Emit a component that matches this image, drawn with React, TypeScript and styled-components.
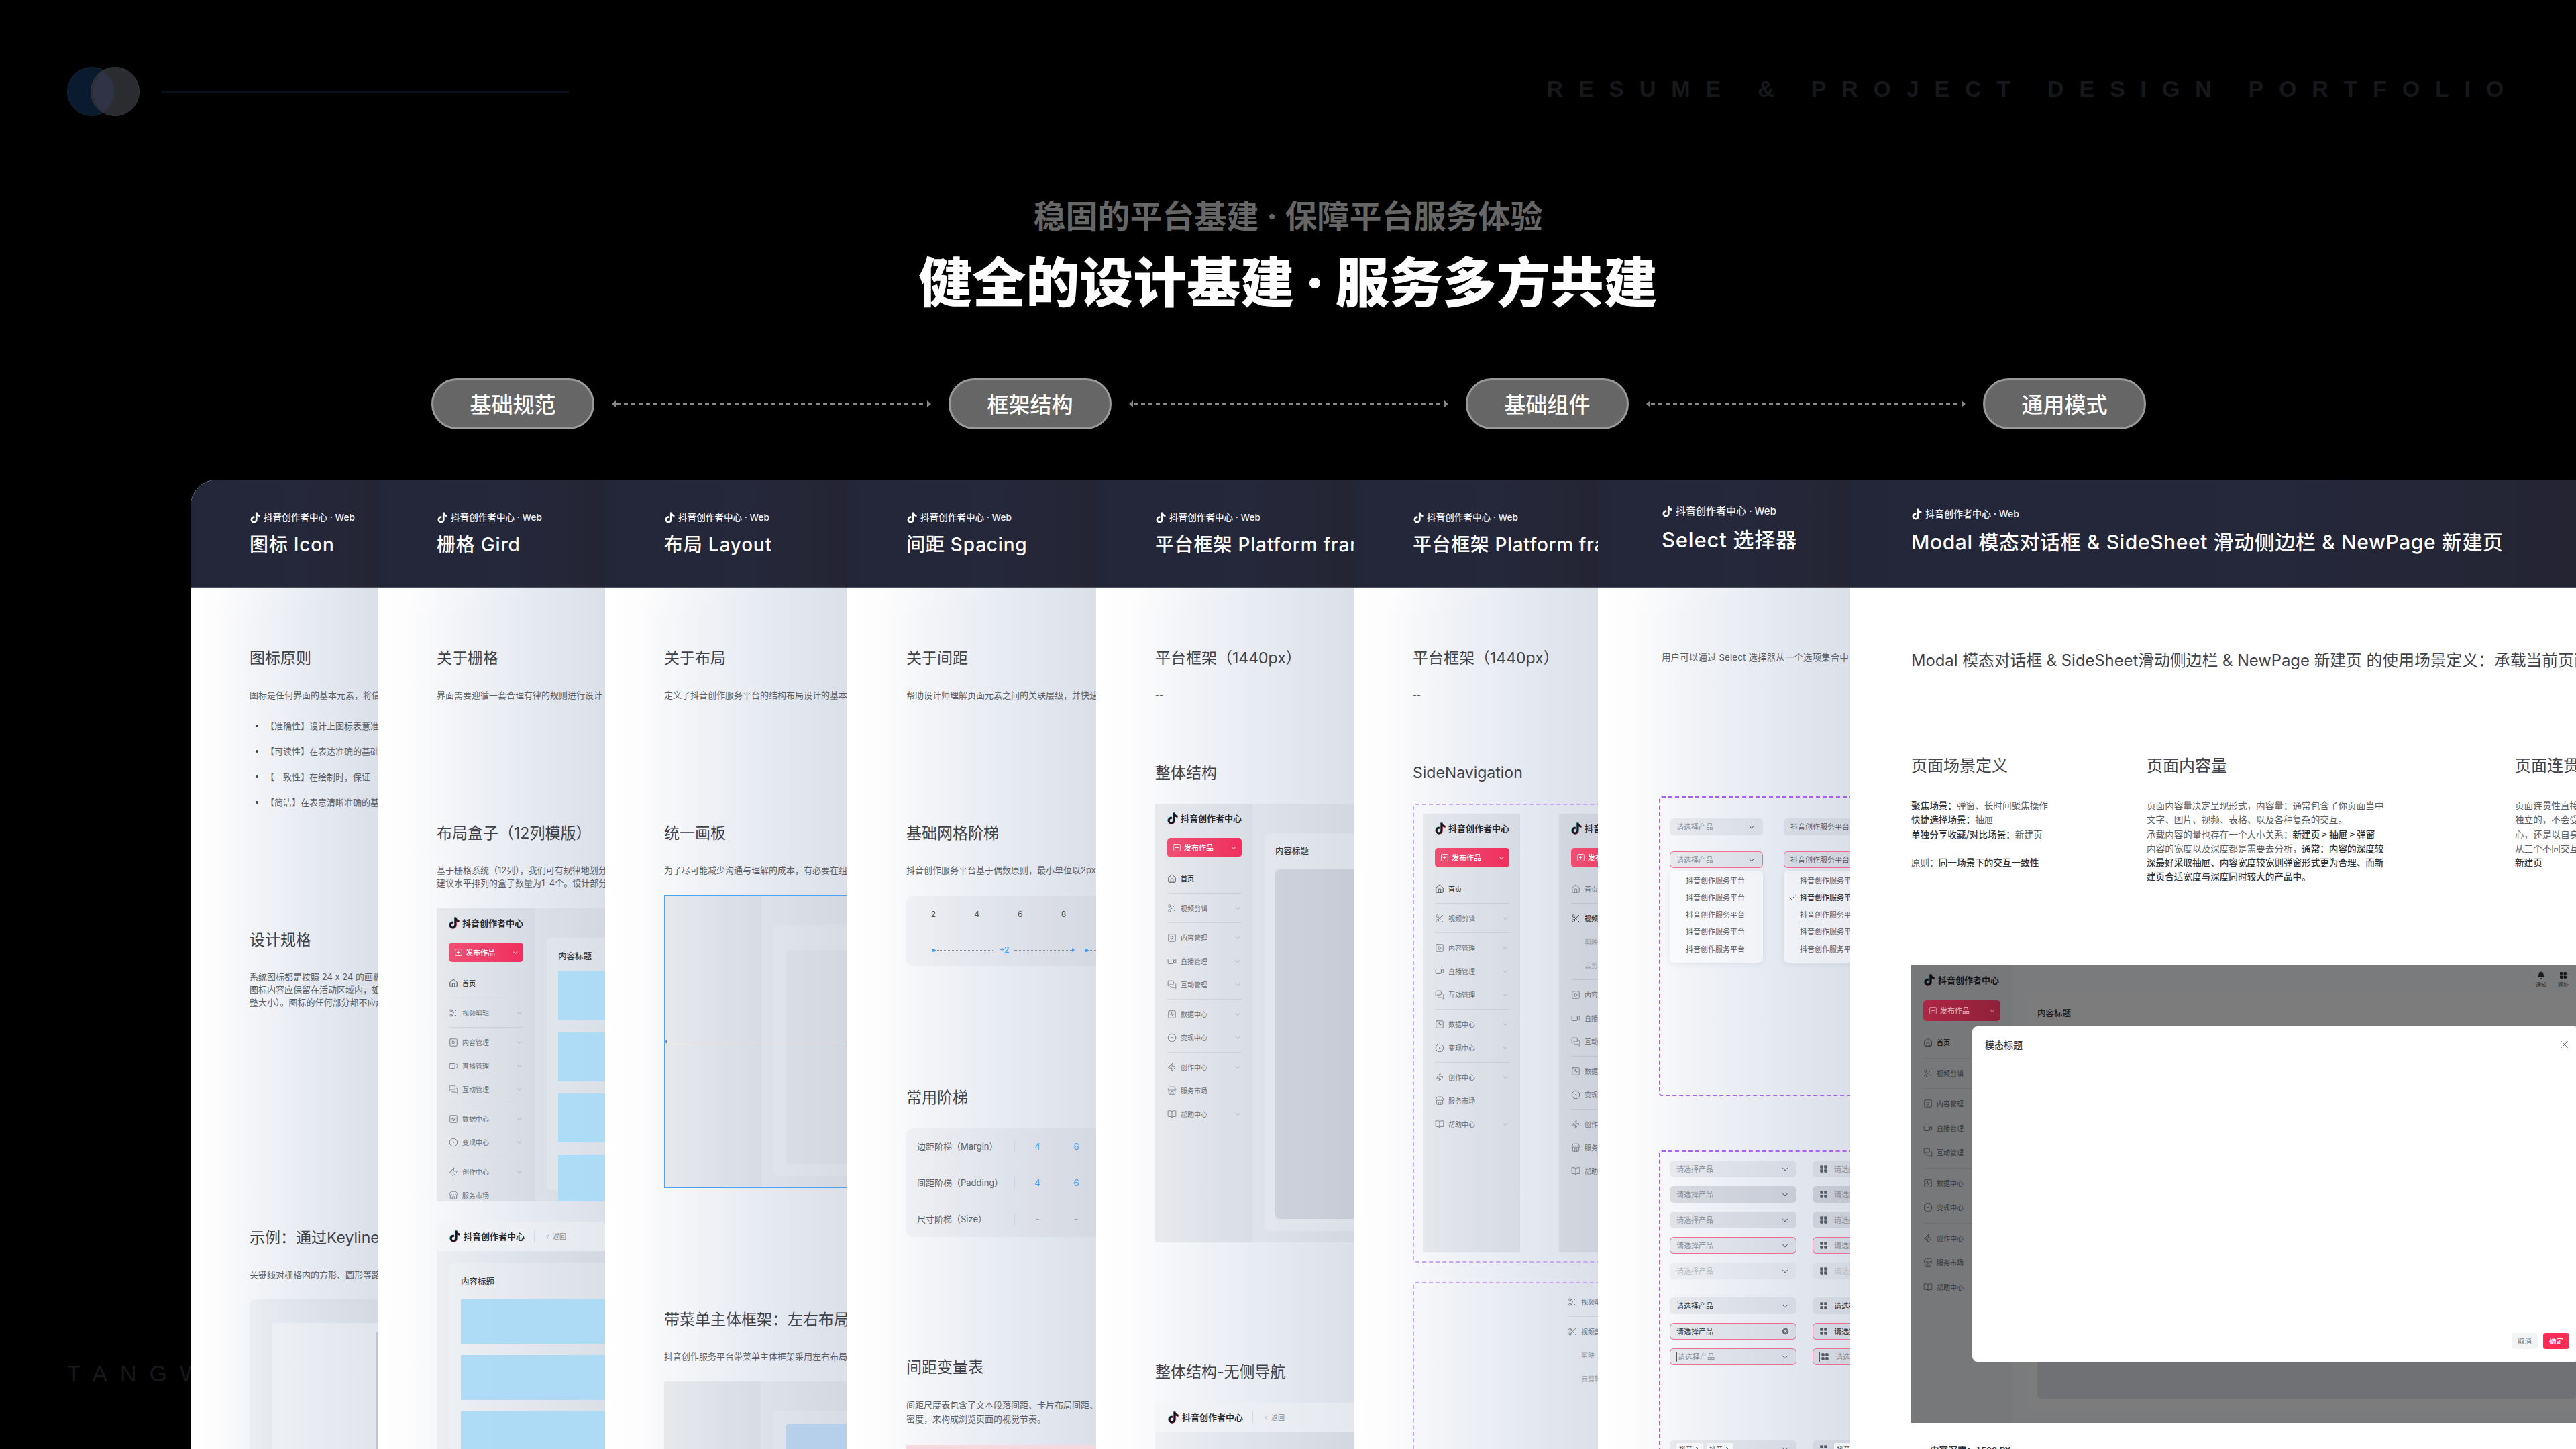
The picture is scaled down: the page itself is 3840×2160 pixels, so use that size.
import React from "react";
import styled, { createGlobalStyle } from "styled-components";
import {
  House, Scissors, SquarePlay, Video, MessagesSquare, SquareActivity, CircleDot, Zap, Store, BookOpen,
  ChevronDown, ChevronLeft, Check, X, Bell, LayoutGrid, SquarePlus, CircleX,
} from "lucide-react";

const Global = createGlobalStyle`
  html, body { margin: 0; padding: 0; background: #000; }
  * { box-sizing: border-box; }
  #root { width: 3840px; height: 2160px; }
`;

const SANS = `Inter, "Noto Sans CJK SC", "Noto Sans", sans-serif`;
const CJK = `"Noto Sans CJK SC", "Noto Sans", sans-serif`;

const Page = styled.div`
  width: 3840px; height: 2160px; background: #000; overflow: hidden;
  display: flex; flex-direction: column; font-family: ${SANS};
`;
const TopBar = styled.header`
  display: flex; height: 173px; padding: 100px 85px 0 100px; flex: 0 0 auto;
`;
const LogoMark = styled.svg`width: 108px; height: 73px; flex: 0 0 auto;`;
const TopRule = styled.div`
  flex: 0 0 607px; height: 3px; margin: 35px 0 0 33px; background: #0a0d1a;
`;
const Strap = styled.div`
  margin: 12px 0 0 auto; font: 700 34px/41px "Liberation Sans", sans-serif;
  letter-spacing: 22.8px; color: #17181c; white-space: nowrap;
`;
const Lead = styled.h2`
  margin: 120px 0 0; text-align: center; font: 700 48px/60px ${SANS}; color: #666;
`;
const Title = styled.h1`
  margin: 23px 0 0; text-align: center; font: 900 80px/90px ${SANS}; color: #fff;
`;
const Steps = styled.div`
  display: flex; align-items: center; margin: 98px 0 0 643px; gap: 26px; height: 76px;
`;
const Pill = styled.div`
  flex: 0 0 243px; height: 76px; border-radius: 38px; background: #666; border: 3px solid #999;
  display: flex; align-items: center; justify-content: center; padding-bottom: 3px;
  font: 500 32px/1 ${CJK}; color: #fff;
`;
const Link = styled.svg`flex: 0 0 476px; height: 16px;`;

const Stage = styled.div`display: flex; flex: 1; margin-top: 75px; min-height: 0;`;
const Gutter = styled.div`
  flex: 0 0 284px; padding-left: 100px; overflow: hidden; display: flex; align-items: flex-end;
  padding-bottom: 93px; font: 400 34px/40px "Liberation Sans", sans-serif; letter-spacing: 19px;
  color: #17181c; white-space: nowrap;
`;
const Card = styled.main`
  flex: 1; display: flex; overflow: hidden; border-top-left-radius: 40px; min-width: 0;
`;

const Column = styled.section<{ $w: number; $plain?: boolean }>`
  flex: 0 0 ${(p) => p.$w}px; display: flex; flex-direction: column; overflow: hidden;
  background: ${(p) =>
    p.$plain
      ? "#fff"
      : `linear-gradient(160deg, rgba(255,255,255,.8) 0, rgba(255,255,255,0) 240px),
         linear-gradient(90deg, #fff 0, #fcfcfd 14%, #f0f2f6 40%, #e4e8f0 72%, #dbdfe8 100%)`};
`;
const Head = styled.div<{ $pad: number; $top?: number }>`
  flex: 0 0 161px; padding: ${(p) => p.$top ?? 46}px 0 0 ${(p) => p.$pad}px;
  background: linear-gradient(90deg, #232638, #25273a 60%, #242433);
  border-bottom: 1px solid #4b4e5e; white-space: nowrap; color: #fff;
`;
const Brand = styled.div<{ $size?: number }>`
  display: flex; align-items: center; gap: 4px; height: 20px;
  font: 500 ${(p) => p.$size ?? 13.6}px/20px ${SANS}; color: #f0f1f4;
`;
const HeadTitle = styled.div<{ $size?: number; $gap?: number; $ls?: number }>`
  margin-top: ${(p) => p.$gap ?? 11}px; font: 500 ${(p) => p.$size ?? 28}px/40px ${SANS}; color: #fff;
  letter-spacing: ${(p) => p.$ls ?? 0.8}px;
`;
const Body = styled.div<{ $pad: number }>`
  flex: 1; padding-left: ${(p) => p.$pad}px; white-space: nowrap; min-height: 0;
`;
const H3 = styled.h3<{ $mt: number; $size?: number }>`
  margin: ${(p) => p.$mt}px 0 0; font: 400 ${(p) => p.$size ?? 23}px/32px ${SANS}; color: #3f424a;
`;
const P = styled.p<{ $mt?: number; $lh?: number; $size?: number; $ml?: number }>`
  margin: ${(p) => p.$mt ?? 30}px 0 0 ${(p) => p.$ml ?? 0}px;
  font: 400 ${(p) => p.$size ?? 13}px/${(p) => p.$lh ?? 19}px ${SANS};
  color: #5b5e66;
`;
const Bullets = styled.ul`margin: 17px 0 0; padding: 0 0 0 24px; list-style: none;`;
const Bullet = styled.li`
  position: relative; height: 38px; font: 400 13px/38px ${SANS}; color: #5b5e66;
  &::before {
    content: ""; position: absolute; left: -15px; top: 17px; width: 4px; height: 4px;
    border-radius: 50%; background: #3c3f48;
  }
`;
const KeylinePanel = styled.div`
  margin-top: 27px; width: 400px; height: 260px; padding: 35px 0 0 34px;
  background: rgba(30, 40, 70, .04); border-radius: 8px;
`;
const KeylineInner = styled.div`
  height: 100%; background: rgba(255, 255, 255, .32); padding: 14px 0 0 154px;
`;
const KeylineStrip = styled.div`width: 6px; height: 100%; background: rgba(30, 40, 70, .16);`;

/* app shell mock */
const Shell = styled.div<{ $h: number; $mt: number; $w?: number; $outlined?: boolean }>`
  position: relative; display: flex; width: ${(p) => p.$w ?? 1000}px; height: ${(p) => p.$h}px;
  margin-top: ${(p) => p.$mt}px; background: rgba(30, 40, 70, .045); overflow: hidden;
  ${(p) => (p.$outlined ? "border: 1px solid #4ba3f5;" : "")}
`;
const ShellColumn = styled(Shell)`flex-direction: column;`;
const Side = styled.aside<{ $w?: number }>`
  flex: 0 0 ${(p) => p.$w ?? 146}px; height: 100%; padding: 12px 0 0 18px;
  background: linear-gradient(90deg, rgba(70,70,80,.035), rgba(40,40,60,.03));
`;
const SideInner = styled.div<{ $w?: number }>`width: ${(p) => p.$w ?? 111}px;`;
const Logo = styled.div`
  display: flex; align-items: center; gap: 4px; height: 20px;
  font: 700 13px/20px ${CJK}; color: #26282f; white-space: nowrap;
`;
const NavButton = styled.div<{ $top?: number; $dim?: boolean; $h?: number }>`
  display: flex; align-items: center; gap: 4px; height: ${(p) => p.$h ?? 29}px;
  margin-top: ${(p) => p.$top ?? 19}px; padding: 0 6px 0 8px; border-radius: 5px;
  position: relative; z-index: ${(p) => (p.$dim ? 3 : 0)};
  background: ${(p) => (p.$dim ? "linear-gradient(90deg,#ad2743,#8f2039)" : "linear-gradient(90deg,#ef4f74,#f02f5f)")};
  font: 500 11px/1 ${CJK}; color: ${(p) => (p.$dim ? "#d9a3ae" : "#fff")};
  & > svg:last-child { margin-left: auto; }
`;
const NavList = styled.nav<{ $top?: number }>`margin-top: ${(p) => p.$top ?? 14}px;`;
const NavRow = styled.div<{ $h?: number; $sub?: boolean; $dark?: boolean }>`
  display: flex; align-items: center; gap: 6px; height: ${(p) => p.$h ?? 35}px;
  padding-left: ${(p) => (p.$sub ? 20 : 0)}px;
  font: ${(p) => (p.$dark ? 500 : 400)} 10px/1 ${CJK};
  color: ${(p) => (p.$dark ? "#2c2e35" : p.$sub ? "#9a9da4" : "#6b6e76")};
  & > svg:last-child:not(:first-child) { margin-left: auto; }
`;
const NavRule = styled.div`
  height: 1px; margin: 4px 0; background: rgba(40, 45, 70, .09);
`;
const ShellMain = styled.div<{ $bottom?: number }>`
  flex: 1; min-width: 0; height: 100%; padding: 44px 0 ${(p) => p.$bottom ?? 17}px 18px;
`;
const ShellCard = styled.div<{ $pad?: number; $alpha?: number }>`
  height: 100%; padding: ${(p) => p.$pad ?? 16}px 0 18px ${(p) => p.$pad ?? 16}px;
  background: rgba(255, 255, 255, ${(p) => p.$alpha ?? 0.2}); border-radius: 8px;
  display: flex; flex-direction: column;
`;
const ShellTitle = styled.div`
  font: 500 12.5px/20px ${CJK}; color: #3a3c44; flex: 0 0 20px;
`;
const GreyBlock = styled.div<{ $mt?: number; $tone?: string }>`
  margin-top: ${(p) => p.$mt ?? 18}px; flex: 1; min-height: 0; border-radius: 6px;
  background: ${(p) => p.$tone ?? "rgba(60, 75, 110, .13)"};
`;
const BlueStack = styled.div<{ $top: number; $gap: number }>`
  display: flex; flex-direction: column; gap: ${(p) => p.$gap}px; margin-top: ${(p) => p.$top}px;
`;
const BlueBlock = styled.div<{ $h: number }>`
  height: ${(p) => p.$h}px; flex: 0 0 auto; background: linear-gradient(90deg, #aedcf6, #a6d2ec);
`;
const ShellBar = styled.div`
  flex: 0 0 44px; display: flex; align-items: center; padding-left: 18px;
  background: rgba(255, 255, 255, .42);
`;
const BarRule = styled.div`width: 1px; height: 18px; margin: 0 14px; background: rgba(40, 45, 70, .1);`;
const Back = styled.div`
  display: flex; align-items: center; gap: 2px; font: 400 10px/1 ${CJK}; color: #8a8d95;
`;
const ShellBody = styled.div`flex: 1; padding: 17px 0 0 18px; min-height: 0;`;
const Guide = styled.div<{ $top: number }>`
  position: absolute; left: 0; right: 0; top: ${(p) => p.$top}px; height: 1px; background: #4ba3f5;
  &::before {
    content: ""; position: absolute; left: 0; top: -3px; border: 3.5px solid transparent;
    border-right-color: #3293ee; border-left-width: 0;
  }
`;

/* spacing */
const ScalePanel = styled.div`
  margin-top: 28px; width: 400px; height: 105px; padding-top: 18px; border-radius: 10px;
  background: rgba(30, 40, 70, .035);
`;
const ScaleNums = styled.div`display: flex; padding-left: 8px;`;
const ScaleNum = styled.span`flex: 0 0 64.7px; text-align: center; font: 400 12px/20px ${SANS}; color: #4a4d55;`;
const ScaleLine = styled.div`
  display: flex; align-items: center; gap: 0; margin: 36px 0 0 38px; width: 340px; height: 14px;
  font: 500 12px/1 ${SANS}; color: #3c9cf5;
`;
const ScaleDot = styled.i`flex: 0 0 5px; height: 5px; border-radius: 50%; background: #3c9cf5;`;
const ScaleDash = styled.i<{ $w: number }>`
  flex: 0 0 ${(p) => p.$w}px; border-top: 1px dotted #3c9cf5;
`;
const ScaleTick = styled.i`flex: 0 0 1px; height: 14px; margin: 0 5px; background: rgba(70, 80, 110, .3);`;
const ScaleArrow = styled.i`
  flex: 0 0 4px; height: 0; border-left: 4px solid #3c9cf5;
  border-top: 3px solid transparent; border-bottom: 3px solid transparent; box-sizing: content-box;
`;
const ScaleLabel = styled.span`flex: 0 0 30px; text-align: center;`;
const StepTable = styled.div`
  margin-top: 30px; width: 400px; height: 162px; border-radius: 10px; background: rgba(30, 40, 70, .035);
`;
const StepRow = styled.div`display: flex; align-items: center; height: 54px;`;
const StepLabel = styled.div`
  flex: 0 0 162px; height: 18px; padding-left: 16px; border-right: 1px solid rgba(40, 50, 80, .08);
  font: 400 13px/18px ${SANS}; color: #5b5e66;
`;
const StepValue = styled.div<{ $muted?: boolean }>`
  flex: 0 0 58px; padding-left: 9px; text-align: center;
  font: 400 13px/18px ${SANS}; color: ${(p) => (p.$muted ? "#9a9da4" : "#3c9cf5")};
`;
const PinkBar = styled.div`margin-top: 28px; width: 400px; height: 40px; background: #f4d9df;`;

/* selects */
const DashBox = styled.div<{ $h: number; $mt: number; $tone: string; $w?: number; $flex?: boolean }>`
  width: ${(p) => p.$w ?? 800}px; height: ${(p) => p.$h}px; margin-top: ${(p) => p.$mt}px;
  border: 2px dashed ${(p) => p.$tone}; border-radius: 4px;
  ${(p) => (p.$flex ? "display:flex; gap:58px; padding: 13px 0 0 13px;" : "")}
`;
const SelectColumns = styled.div<{ $gap: number; $pad: number }>`
  display: flex; gap: ${(p) => p.$gap}px; padding: ${(p) => p.$pad}px 0 0 14px;
`;
const SelectColumn = styled.div<{ $w: number }>`flex: 0 0 ${(p) => p.$w}px; display: flex; flex-direction: column;`;
const Select = styled.div<{ $bg?: string; $error?: boolean; $text?: string; $mt?: number }>`
  display: flex; align-items: center; flex: 0 0 25px; height: 25px; padding: 0 10px;
  margin-top: ${(p) => p.$mt ?? 0}px; border-radius: 6px; background: ${(p) => p.$bg ?? "rgba(40, 50, 80, .07)"};
  ${(p) => (p.$error ? "box-shadow: inset 0 0 0 1px #ec6f8b;" : "")}
  font: 400 11px/1 ${CJK}; color: ${(p) => p.$text ?? "#8b8e96"}; white-space: nowrap;
  & > svg:last-child { margin-left: auto; color: #555861; }
`;
const Caret = styled.i`width: 1px; height: 14px; margin-right: 1px; background: #555;`;
const PrefixIcon = styled(LayoutGrid)`margin-right: 9px; color: #555861; fill: #555861;`;
const Tag = styled.span`
  display: inline-flex; align-items: center; gap: 3px; height: 18px; padding: 0 4px; margin-right: 5px;
  background: #f5f6f9; border-radius: 3px; font: 400 10px/1 ${CJK}; color: #555;
`;
const Dropdown = styled.div`
  margin-top: 4px; height: 137px; padding: 2px 0; background: rgba(255, 255, 255, .42); border-radius: 6px;
  box-shadow: 0 2px 8px rgba(30, 40, 70, .08);
`;
const Option = styled.div<{ $on?: boolean }>`
  position: relative; height: 25.4px; padding-left: 24px;
  font: ${(p) => (p.$on ? 500 : 400)} 11px/25.4px ${CJK}; color: ${(p) => (p.$on ? "#33353c" : "#55585f")};
  white-space: nowrap;
  & > svg { position: absolute; left: 7px; top: 7px; }
`;
const NavListOffset = styled.div`padding: 10px 0 0 229px; width: 400px;`;

/* modal column */
const IntroRow = styled.div`display: flex; margin-top: 125px;`;
const Intro = styled.div<{ $w?: number }>`
  flex: ${(p) => (p.$w ? `0 0 ${p.$w}px` : "1")};
`;
const IntroText = styled.div`
  margin-top: 32px; font: 400 13.6px/21.3px ${CJK}; color: #5b5e66; height: 128px;
  & b { font-weight: 500; color: #2f3138; }
`;
const Line = styled.div`min-height: 21.3px;`;
const ModalShell = styled.div`
  position: relative; display: flex; width: 991px; height: 682px; margin-top: 121px; overflow: hidden;
  background: #f0f1f4;
`;
const Scrim = styled.div`position: absolute; inset: 0; z-index: 1; background: rgba(0, 0, 0, .49);`;
const ModalDialog = styled.div`
  position: absolute; z-index: 2; left: 91px; top: 91px; width: 905px; height: 500px;
  background: #fff; border-radius: 8px; display: flex; flex-direction: column;
`;
const DialogHead = styled.div`
  display: flex; align-items: center; justify-content: space-between; height: 20px;
  margin: 17px 0 0 19px; padding-right: 13px; font: 500 14px/20px ${CJK}; color: #33353c;
`;
const DialogFoot = styled.div`
  margin-top: auto; display: flex; gap: 8px; padding: 0 15px 19px 0; justify-content: flex-end;
`;
const DialogBtn = styled.div<{ $primary?: boolean }>`
  width: 39px; height: 24px; border-radius: 4px; display: flex; align-items: center; justify-content: center;
  font: 500 10.5px/1 ${CJK}; color: ${(p) => (p.$primary ? "#fff" : "#888")};
  background: ${(p) => (p.$primary ? "#fe2c55" : "#f2f3f5")};
`;
const ModalMain = styled.div`flex: 1; min-width: 0; display: flex; flex-direction: column; padding-left: 18px;`;
const ModalTools = styled.div`
  flex: 0 0 42px; display: flex; justify-content: flex-end; gap: 17px; padding: 9px 11px 0 0;
`;
const Tool = styled.div`
  width: 16px; display: flex; flex-direction: column; align-items: center; gap: 3px;
  font: 400 8px/10px ${CJK}; color: #555;
`;
const ModalCard = styled(ShellCard)`height: auto; flex: 1; margin-bottom: 18px;`;
const Caption = styled.div`
  margin: 30px 0 0 28px; font: 700 13.6px/20px ${CJK}; color: #2f3138;
`;

/* drawings */
const TikTokPath = "M448,209.91a210.06,210.06,0,0,1-122.77-39.25V349.38A162.55,162.55,0,1,1,185,188.31V278.2a74.62,74.62,0,1,0,52.23,71.18V0l88,0a121.18,121.18,0,0,0,1.86,22.17h0A122.18,122.18,0,0,0,381,102.39a121.43,121.43,0,0,0,67,20.14Z";
const Note = ({ size = 16, color }: { size?: number; color?: boolean }) => (
  <svg width={size} height={size} viewBox="-20 -16 488 544">
    {color && <path d={TikTokPath} fill="#25d9e4" transform="translate(-16 -8)" />}
    {color && <path d={TikTokPath} fill="#fe2c55" transform="translate(14 10)" />}
    <path d={TikTokPath} fill={color ? "#16181f" : "#fff"} />
  </svg>
);

const LinkLine = () => (
  <Link viewBox="0 0 476 16">
    <path d="M0 8 L6 3 V13 Z M476 8 L470 3 V13 Z" fill="#888" />
    <line x1="7" y1="8" x2="469" y2="8" stroke="#8a8a8a" strokeWidth="2.4" strokeDasharray="6 5" />
  </Link>
);

type NavItem = { icon: React.ElementType; label: string; chevron?: boolean; dark?: boolean; subs?: string[] };
const groups = (expanded = false): NavItem[][] => [
  [{ icon: House, label: "首页", dark: !expanded }],
  [{ icon: Scissors, label: "视频剪辑", chevron: true, dark: expanded, subs: expanded ? ["剪映", "云剪辑"] : undefined }],
  [
    { icon: SquarePlay, label: "内容管理", chevron: true },
    { icon: Video, label: "直播管理", chevron: true },
    { icon: MessagesSquare, label: "互动管理", chevron: true },
  ],
  [
    { icon: SquareActivity, label: "数据中心", chevron: true },
    { icon: CircleDot, label: "变现中心", chevron: true },
  ],
  [
    { icon: Zap, label: "创作中心", chevron: true },
    { icon: Store, label: "服务市场" },
    { icon: BookOpen, label: "帮助中心", chevron: true },
  ],
];

const SideNav = ({ expanded, rowH, btnTop, btnH, dim, w, innerW }: {
  expanded?: boolean; rowH?: number; btnTop?: number; btnH?: number; dim?: boolean; w?: number; innerW?: number;
}) => (
  <Side $w={w}>
    <SideInner $w={innerW}>
      <Logo><Note size={18} color />抖音创作者中心</Logo>
      <NavButton $top={btnTop} $h={btnH} $dim={dim}>
        <SquarePlus size={13} strokeWidth={1.6} />发布作品<ChevronDown size={12} strokeWidth={2} />
      </NavButton>
      <NavList>
        {groups(expanded).map((g, i) => (
          <React.Fragment key={i}>
            {i > 0 && <NavRule />}
            {g.map((it) => (
              <React.Fragment key={it.label}>
                <NavRow $h={rowH} $dark={it.dark}>
                  <it.icon size={14} strokeWidth={1.4} />
                  {it.label}
                  {it.chevron && <ChevronDown size={12} strokeWidth={1.4} color="#9a9da4" />}
                </NavRow>
                {it.subs?.map((s) => <NavRow key={s} $sub $h={rowH}>{s}</NavRow>)}
              </React.Fragment>
            ))}
          </React.Fragment>
        ))}
      </NavList>
    </SideInner>
  </Side>
);

const BarLogo = () => (
  <ShellBar>
    <Logo><Note size={18} color />抖音创作者中心</Logo>
    <BarRule />
    <Back><ChevronLeft size={11} />返回</Back>
  </ShellBar>
);

const ColHead = ({ pad, top, gap, size, brandSize, ls, children }: {
  pad: number; top?: number; gap?: number; size?: number; brandSize?: number; ls?: number; children: React.ReactNode;
}) => (
  <Head $pad={pad} $top={top}>
    <Brand $size={brandSize}><Note size={17} />抖音创作者中心 · Web</Brand>
    <HeadTitle $size={size} $gap={gap} $ls={ls}>{children}</HeadTitle>
  </Head>
);

const Arrow = () => <ChevronDown size={14} strokeWidth={1.8} />;
const Opts = ({ on }: { on?: number }) => (
  <Dropdown>
    {[0, 1, 2, 3, 4].map((i) => (
      <Option key={i} $on={on === i}>
        {on === i && <Check size={12} strokeWidth={1.6} />}抖音创作服务平台
      </Option>
    ))}
  </Dropdown>
);

const PH = "请选择产品";
const selectRows = (prefix: boolean) => {
  const pre = prefix ? <PrefixIcon size={13} strokeWidth={1.2} /> : null;
  return (
    <>
      <Select>{pre}{PH}<Arrow /></Select>
      <Select $mt={13} $bg="rgba(40,50,80,.14)">{pre}{PH}<Arrow /></Select>
      <Select $mt={13} $bg="rgba(40,50,80,.1)">{pre}{PH}<Arrow /></Select>
      <Select $mt={13} $error>{pre}{PH}<Arrow /></Select>
      <Select $mt={13} $bg="rgba(40,50,80,.04)" $text="#b8bac0">{pre}{PH}<Arrow /></Select>
      <Select $mt={27} $text="#2f3138">{pre}{PH}<Arrow /></Select>
      <Select $mt={13} $error $text="#2f3138">{pre}{PH}{prefix ? <Arrow /> : <CircleX size={13} fill="#6a6d75" stroke="#e8eaf0" />}</Select>
      <Select $mt={13} $error><Caret />{pre}{PH}<Arrow /></Select>
      <Select $mt={112}>
        {pre}<Tag>抖音<X size={9} /></Tag><Tag>抖音<X size={9} /></Tag><Arrow />
      </Select>
    </>
  );
};

export default function App() {
  return (
    <Page>
      <Global />
      <TopBar>
        <LogoMark viewBox="0 0 108 73">
          <ellipse cx="36.5" cy="36.5" rx="36" ry="36" fill="#0a1b30" stroke="#1a2636" />
          <ellipse cx="71.5" cy="36.5" rx="36" ry="36" fill="#2c2e33" fillOpacity=".95" stroke="#3a3c42" />
          <path d="M54 6.5 A36 36 0 0 1 54 66.5 A36 36 0 0 1 54 6.5Z" fill="#2f3345" />
        </LogoMark>
        <TopRule />
        <Strap>RESUME &amp; PROJECT DESIGN PORTFOLIO</Strap>
      </TopBar>
      <Lead>稳固的平台基建 · 保障平台服务体验</Lead>
      <Title>健全的设计基建 · 服务多方共建</Title>
      <Steps>
        <Pill>基础规范</Pill><LinkLine />
        <Pill>框架结构</Pill><LinkLine />
        <Pill>基础组件</Pill><LinkLine />
        <Pill>通用模式</Pill>
      </Steps>
      <Stage>
        <Gutter>TANGWEI</Gutter>
        <Card>
          <Column $w={280}>
            <ColHead pad={88}>图标 Icon</ColHead>
            <Body $pad={88}>
              <H3 $mt={89}>图标原则</H3>
              <P>图标是任何界面的基本元素，将信息以图形传达</P>
              <Bullets>
                <Bullet>【准确性】设计上图标表意准确清晰</Bullet>
                <Bullet>【可读性】在表达准确的基础上易于识别</Bullet>
                <Bullet>【一致性】在绘制时，保证一致风格</Bullet>
                <Bullet>【简洁】在表意清晰准确的基础上</Bullet>
              </Bullets>
              <H3 $mt={170}>设计规格</H3>
              <P>
                系统图标都是按照 24 x 24 的画板设计<br />
                图标内容应保留在活动区域内，如需<br />
                整大小）。图标的任何部分都不应超出
              </P>
              <H3 $mt={325}>示例：通过Keyline绘制</H3>
              <P>关键线对栅格内的方形、圆形等路径</P>
              <KeylinePanel><KeylineInner><KeylineStrip /></KeylineInner></KeylinePanel>
            </Body>
          </Column>

          <Column $w={338}>
            <ColHead pad={87}>栅格 Gird</ColHead>
            <Body $pad={87}>
              <H3 $mt={89}>关于栅格</H3>
              <P>界面需要迎循一套合理有律的规则进行设计</P>
              <H3 $mt={180}>布局盒子（12列模版）</H3>
              <P>
                基于栅格系统（12列），我们可有规律地划分<br />
                建议水平排列的盒子数量为1–4个。设计部分
              </P>
              <Shell $h={437} $mt={28}>
                <SideNav />
                <ShellMain>
                  <ShellCard $pad={17}>
                    <ShellTitle>内容标题</ShellTitle>
                    <BlueStack $top={13} $gap={18}>
                      <BlueBlock $h={73} /><BlueBlock $h={73} /><BlueBlock $h={73} /><BlueBlock $h={73} />
                    </BlueStack>
                  </ShellCard>
                </ShellMain>
              </Shell>
              <ShellColumn $h={340} $mt={30}>
                <BarLogo />
                <ShellBody>
                  <ShellCard $pad={18}>
                    <ShellTitle>内容标题</ShellTitle>
                    <BlueStack $top={16} $gap={17}>
                      <BlueBlock $h={67} /><BlueBlock $h={67} /><BlueBlock $h={67} />
                    </BlueStack>
                  </ShellCard>
                </ShellBody>
              </ShellColumn>
            </Body>
          </Column>

          <Column $w={360}>
            <ColHead pad={88}>布局 Layout</ColHead>
            <Body $pad={88}>
              <H3 $mt={89}>关于布局</H3>
              <P>定义了抖音创作服务平台的结构布局设计的基本</P>
              <H3 $mt={180}>统一画板</H3>
              <P>为了尽可能减少沟通与理解的成本，有必要在组</P>
              <Shell $h={437} $mt={27} $outlined>
                <Side $w={144} />
                <ShellMain>
                  <ShellCard $pad={19} $alpha={0.12}>
                    <GreyBlock $mt={18} $tone="rgba(60,75,110,.03)" />
                  </ShellCard>
                </ShellMain>
                <Guide $top={218} />
              </Shell>
              <H3 $mt={180}>带菜单主体框架：左右布局</H3>
              <P>抖音创作服务平台带菜单主体框架采用左右布局</P>
              <Shell $h={300} $mt={27}>
                <Side $w={144} />
                <ShellMain>
                  <ShellCard $pad={19} $alpha={0.12}>
                    <GreyBlock $mt={0} $tone="#b6cfea" />
                  </ShellCard>
                </ShellMain>
              </Shell>
            </Body>
          </Column>

          <Column $w={372}>
            <ColHead pad={89}>间距 Spacing</ColHead>
            <Body $pad={89}>
              <H3 $mt={89}>关于间距</H3>
              <P>帮助设计师理解页面元素之间的关联层级，并快速</P>
              <H3 $mt={180}>基础网格阶梯</H3>
              <P>抖音创作服务平台基于偶数原则，最小单位以2px</P>
              <ScalePanel>
                <ScaleNums>
                  <ScaleNum>2</ScaleNum><ScaleNum>4</ScaleNum><ScaleNum>6</ScaleNum><ScaleNum>8</ScaleNum>
                </ScaleNums>
                <ScaleLine>
                  <ScaleDot /><ScaleDash $w={88} /><ScaleLabel>+2</ScaleLabel><ScaleDash $w={86} /><ScaleArrow />
                  <ScaleTick /><ScaleDot /><ScaleDash $w={40} />
                </ScaleLine>
              </ScalePanel>
              <H3 $mt={180}>常用阶梯</H3>
              <StepTable>
                <StepRow><StepLabel>边距阶梯（Margin）</StepLabel><StepValue>4</StepValue><StepValue>6</StepValue></StepRow>
                <StepRow><StepLabel>间距阶梯（Padding）</StepLabel><StepValue>4</StepValue><StepValue>6</StepValue></StepRow>
                <StepRow><StepLabel>尺寸阶梯（Size）</StepLabel><StepValue $muted>-</StepValue><StepValue $muted>-</StepValue></StepRow>
              </StepTable>
              <H3 $mt={178}>间距变量表</H3>
              <P $lh={21}>
                间距尺度表包含了文本段落间距、卡片布局间距、<br />
                密度，来构成浏览页面的视觉节奏。
              </P>
              <PinkBar />
            </Body>
          </Column>

          <Column $w={384}>
            <ColHead pad={88}>平台框架 Platform frame</ColHead>
            <Body $pad={88}>
              <H3 $mt={89}>平台框架（1440px）</H3>
              <P>--</P>
              <H3 $mt={90}>整体结构</H3>
              <Shell $h={654} $mt={30}>
                <SideNav w={145} />
                <ShellMain>
                  <ShellCard>
                    <ShellTitle>内容标题</ShellTitle>
                    <GreyBlock />
                  </ShellCard>
                </ShellMain>
              </Shell>
              <H3 $mt={177}>整体结构-无侧导航</H3>
              <ShellColumn $h={200} $mt={30}>
                <BarLogo />
                <ShellBody />
              </ShellColumn>
            </Body>
          </Column>

          <Column $w={364}>
            <ColHead pad={88} ls={0.6}>平台框架 Platform frame</ColHead>
            <Body $pad={88}>
              <H3 $mt={89}>平台框架（1440px）</H3>
              <P>--</P>
              <H3 $mt={90}>SideNavigation</H3>
              <DashBox $h={684} $mt={30} $tone="#c9a6f5" $flex>
                <Shell $h={654} $mt={0} $w={145}><SideNav w={145} /></Shell>
                <Shell $h={654} $mt={0} $w={145}><SideNav w={145} expanded /></Shell>
              </DashBox>
              <DashBox $h={300} $mt={29} $tone="#c9a6f5">
                <SelectColumn $w={130}>
                  <NavListOffset>
                    <NavRow><Scissors size={14} strokeWidth={1.4} />视频剪辑</NavRow>
                    <NavRule />
                    <NavRow><Scissors size={14} strokeWidth={1.4} />视频剪辑</NavRow>
                    <NavRow $sub>剪映</NavRow>
                    <NavRow $sub>云剪辑</NavRow>
                  </NavListOffset>
                </SelectColumn>
              </DashBox>
            </Body>
          </Column>

          <Column $w={376}>
            <ColHead pad={95} top={37} gap={13} size={31} brandSize={15}>Select 选择器</ColHead>
            <Body $pad={91}>
              <P $mt={94} $lh={20} $size={13.6} $ml={4}>用户可以通过 Select 选择器从一个选项集合中</P>
              <DashBox $h={447} $mt={197} $tone="#a95ff3">
                <SelectColumns $gap={31} $pad={31}>
                  <SelectColumn $w={139}>
                    <Select>{PH}<Arrow /></Select>
                    <Select $mt={24} $error>{PH}<Arrow /></Select>
                    <Opts />
                  </SelectColumn>
                  <SelectColumn $w={139}>
                    <Select $text="#55585f">抖音创作服务平台<Arrow /></Select>
                    <Select $mt={24} $error $text="#55585f">抖音创作服务平台<Arrow /></Select>
                    <Opts on={1} />
                  </SelectColumn>
                </SelectColumns>
              </DashBox>
              <DashBox $h={470} $mt={81} $tone="#a95ff3">
                <SelectColumns $gap={24} $pad={13}>
                  <SelectColumn $w={189}>{selectRows(false)}</SelectColumn>
                  <SelectColumn $w={189}>{selectRows(true)}</SelectColumn>
                </SelectColumns>
              </DashBox>
            </Body>
          </Column>

          <Column $w={1082} $plain>
            <ColHead pad={91} top={41} gap={12} size={30} ls={0.6} brandSize={14}>
              Modal 模态对话框 &amp; SideSheet 滑动侧边栏 &amp; NewPage 新建页
            </ColHead>
            <Body $pad={91}>
              <H3 $mt={93} $size={23.8}>Modal 模态对话框 &amp; SideSheet滑动侧边栏 &amp; NewPage 新建页 的使用场景定义：承载当前页面任务</H3>
              <IntroRow>
                <Intro $w={351}>
                  <H3 $mt={0} $size={24}>页面场景定义</H3>
                  <IntroText>
                    <Line><b>聚焦场景：</b>弹窗、长时间聚焦操作</Line>
                    <Line><b>快捷选择场景：</b>抽屉</Line>
                    <Line><b>单独分享收藏/对比场景：</b>新建页</Line>
                    <Line />
                    <Line>原则：<b>同一场景下的交互一致性</b></Line>
                  </IntroText>
                </Intro>
                <Intro $w={549}>
                  <H3 $mt={0} $size={24}>页面内容量</H3>
                  <IntroText>
                    <Line>页面内容量决定呈现形式，内容量：通常包含了你页面当中</Line>
                    <Line>文字、图片、视频、表格、以及各种复杂的交互。</Line>
                    <Line>承载内容的量也存在一个大小关系：<b>新建页 &gt; 抽屉 &gt; 弹窗</b></Line>
                    <Line>内容的宽度以及深度都是需要去分析，<b>通常：内容的深度较</b></Line>
                    <Line><b>深最好采取抽屉、内容宽度较宽则弹窗形式更为合理、而新</b></Line>
                    <Line><b>建页合适宽度与深度同时较大的产品中。</b></Line>
                  </IntroText>
                </Intro>
                <Intro>
                  <H3 $mt={0} $size={24}>页面连贯性</H3>
                  <IntroText>
                    <Line>页面连贯性直接影响</Line>
                    <Line>独立的，不会受到</Line>
                    <Line>心，还是以自身</Line>
                    <Line>从三个不同交互</Line>
                    <Line><b>新建页</b></Line>
                  </IntroText>
                </Intro>
              </IntroRow>
              <ModalShell>
                <SideNav w={151} innerW={115} rowH={36.5} btnTop={20} btnH={31} dim />
                <ModalMain>
                  <ModalTools>
                    <Tool><Bell size={12} fill="#333" stroke="#333" />通知</Tool>
                    <Tool><LayoutGrid size={12} fill="#333" stroke="#333" />网址</Tool>
                  </ModalTools>
                  <ModalCard $pad={19}>
                    <ShellTitle>内容标题</ShellTitle>
                    <GreyBlock />
                  </ModalCard>
                </ModalMain>
                <Scrim />
                <ModalDialog>
                  <DialogHead>模态标题<X size={18} strokeWidth={1.3} color="#777" /></DialogHead>
                  <DialogFoot>
                    <DialogBtn>取消</DialogBtn>
                    <DialogBtn $primary>确定</DialogBtn>
                  </DialogFoot>
                </ModalDialog>
              </ModalShell>
              <Caption>内容深度：1500 PX</Caption>
            </Body>
          </Column>
        </Card>
      </Stage>
    </Page>
  );
}
